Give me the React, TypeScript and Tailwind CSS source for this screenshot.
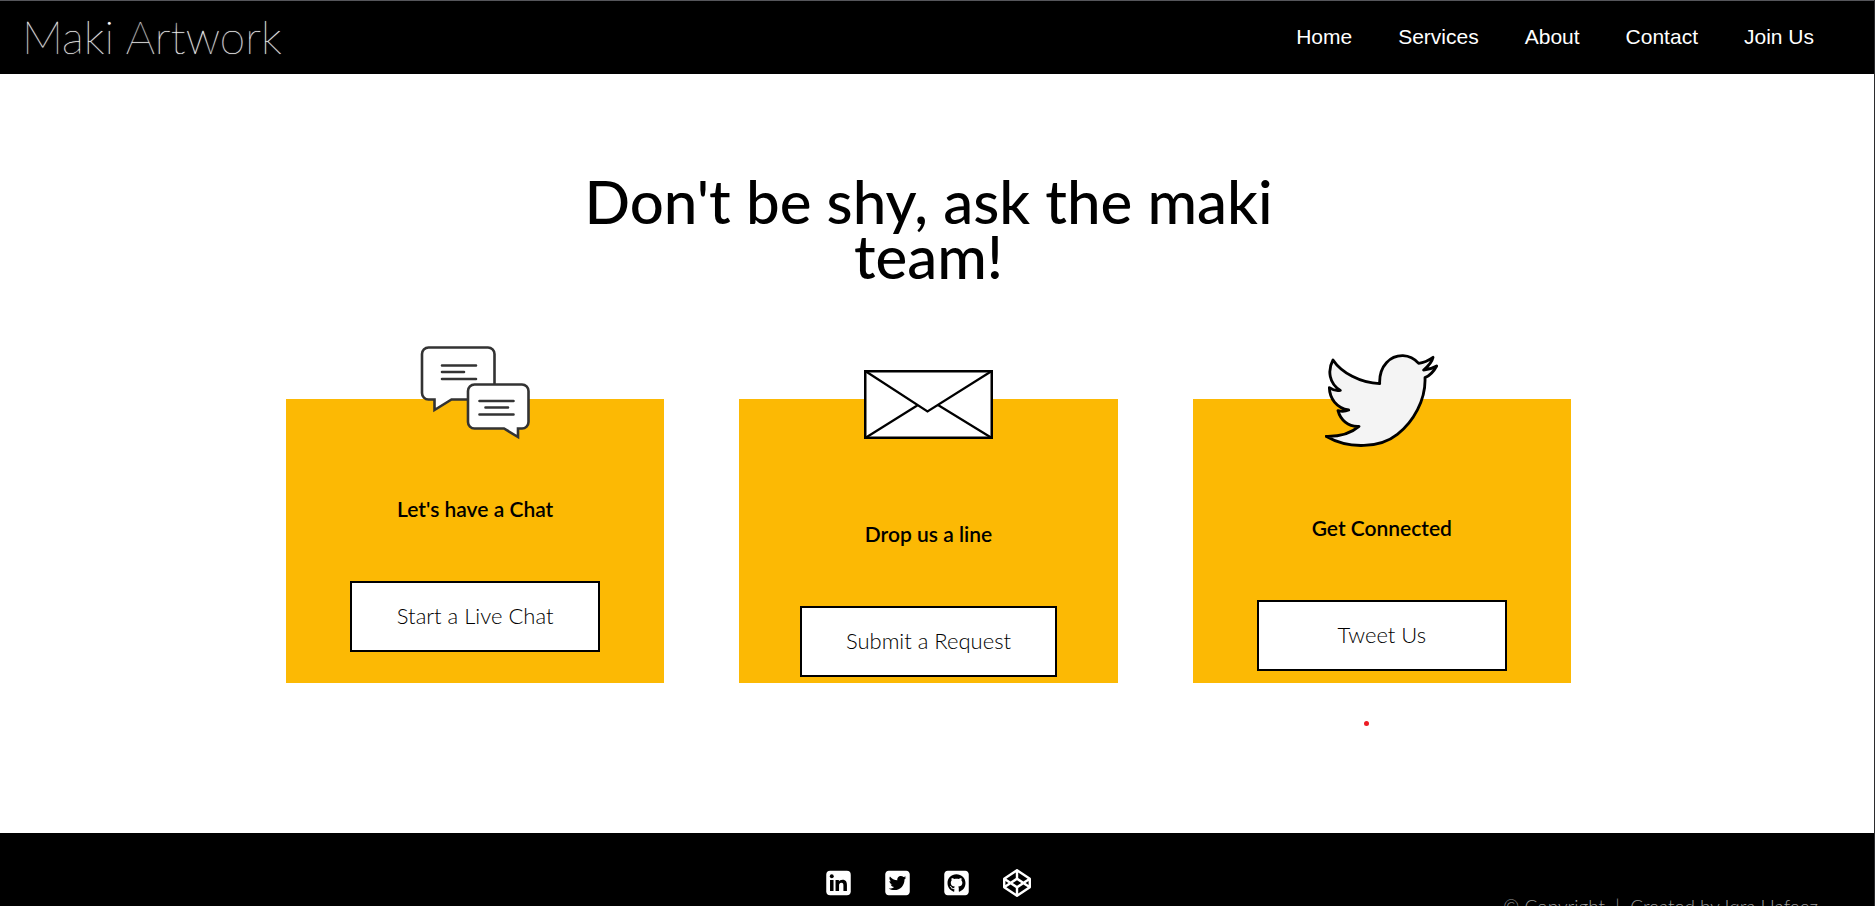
import { FaCodepen, FaSquareGithub, FaSquareTwitter } from "react-icons/fa6";
import type { ReactNode } from "react";

const navItems = ["Home", "Services", "About", "Contact", "Join Us"];

function ChatIcon() {
  return (
    <svg width="110" height="95" viewBox="0 0 110 95" fill="#fff" stroke="#333" strokeWidth="2.6" strokeLinecap="round" aria-hidden="true">
      <path d="M8.500 2.500H68a6.500 6.500 0 0 1 6.500 6.500V48a6.500 6.500 0 0 1-6.500 6.500H31.500L14.500 65V54.500H8.500A6.500 6.500 0 0 1 2 48V9A6.500 6.500 0 0 1 8.500 2.500Z" />
      <path d="M22 20.500H56M22 27H44M22 34H56" />
      <path d="M54.500 39.500H102a6.500 6.500 0 0 1 6.500 6.500V77a6.500 6.500 0 0 1-6.500 6.500H98V92L84 83.500H54.500A6.500 6.500 0 0 1 48 77V46A6.500 6.500 0 0 1 54.500 39.500Z" />
      <path d="M59.500 56H93.500M65.500 62.500H88M59.500 69.500H93.500" />
    </svg>
  );
}

function EnvelopeIcon() {
  return (
    <svg width="129" height="69" viewBox="0 0 129 69" fill="none" stroke="#000" strokeWidth="2.200" aria-hidden="true">
      <rect x="1.200" y="1.200" width="126.600" height="66.600" fill="#fff" strokeWidth="2.600" />
      <path d="M2 1.500L63.500 41.500L127 1.500M2 67.500L54 35M127 67.500L74 35" />
    </svg>
  );
}

function BirdIcon() {
  return (
    <svg width="113" height="94" viewBox="75 43 339 282" fill="#f4f4f4" stroke="#000" strokeWidth="8.500" strokeLinejoin="round" aria-hidden="true">
      <path d="M99 61C124 99 181 130 239 132C237 77 272 47 309 48C329 49 346 60 356 71C372 69 386 62 399 53C396 67 385 79 371 91C385 90 398 86 410 79C402 94 389 108 375 114C378 180 340 247 292 284C241 325 147 330 78 290C119 291 154 280 177 260C144 262 121 240 114 213C126 216 137 215 146 211C109 205 89 176 88 144C98 151 110 154 121 152C87 131 82 92 99 61Z" />
    </svg>
  );
}

function LinkedInIcon() {
  return (
    <svg width="25" height="28" viewBox="0 0 448 512" aria-hidden="true">
      <rect y="32" width="448" height="448" rx="72" fill="#fff" />
      <circle cx="101" cy="132" r="36" />
      <path d="M69 200H133V404H69ZM170 200H231V228C241 210 264 195 297 195C363 195 378 239 378 294V404H314V306C314 279 313 253 277 253C242 253 234 280 234 305V404H170Z" />
    </svg>
  );
}

type ContactCardProps = { icon: ReactNode; title: string; action: string; iconSpace: string; wide?: boolean };

function ContactCard({ icon, title, action, iconSpace, wide }: ContactCardProps) {
  return (
    <article className="flex h-[284px] flex-1 flex-col items-center bg-[#fcb904]">
      <div className={iconSpace}>{icon}</div>
      <h2 className="text-[21px] leading-7 font-semibold">{title}</h2>
      <button
        type="button"
        className={`mt-[58px] h-[71px] shrink-0 border-2 border-black bg-white pb-[2px] text-[22px] font-light ${wide ? "w-[257px]" : "w-[250px]"}`}
      >
        {action}
      </button>
    </article>
  );
}

export default function App() {
  return (
    <div className="flex h-screen flex-col overflow-hidden border-r border-[#2b2b2d] bg-white font-['Lato',sans-serif] text-black">
      <header className="flex h-[74px] shrink-0 items-center justify-between border-t border-[#55565b] bg-black pr-[60px] pb-[2px] pl-[22px] text-white">
        <a href="#home" className="text-[46px] leading-none font-thin [text-shadow:0_0_1px_#fff]">Maki Artwork</a>
        <nav className="flex gap-[46px] font-['Liberation_Sans',sans-serif] text-[21px]">
          {navItems.map((item) => (
            <a key={item} href={`#${item.toLowerCase().replace(" ", "-")}`}>{item}</a>
          ))}
        </nav>
      </header>

      <main className="h-[759px] shrink-0 pt-[100px] pr-[17px]">
        <h1 className="mx-auto max-w-[743px] text-center text-[60px] leading-[55px] font-medium">Don't be shy, ask the maki team!</h1>
        <section className="mx-auto mt-[115px] flex w-full max-w-[1285px] gap-[75px]">
          <ContactCard icon={<ChatIcon />} title="Let's have a Chat" action="Start a Live Chat" iconSpace="-mt-[54px] h-[150px]" />
          <ContactCard icon={<EnvelopeIcon />} title="Drop us a line" action="Submit a Request" iconSpace="-mt-[29px] h-[150px]" wide />
          <ContactCard icon={<BirdIcon />} title="Get Connected" action="Tweet Us" iconSpace="-mt-[45px] h-[160px]" />
        </section>
        <div className="mx-auto flex w-full max-w-[1285px] justify-end pt-[38px] pr-[202px]">
          <span className="size-[5px] rounded-full bg-[#ed1c24]" />
        </div>
      </main>

      <footer className="h-32 shrink-0 bg-black pt-[36px] text-white">
        <div className="flex items-center justify-center gap-[34px] pr-[17px] text-[28px]">
          <a href="#linkedin" aria-label="LinkedIn"><LinkedInIcon /></a>
          <a href="#twitter" aria-label="Twitter"><FaSquareTwitter className="w-[25px]" /></a>
          <a href="#github" aria-label="GitHub"><FaSquareGithub className="w-[25px]" /></a>
          <a href="#codepen" aria-label="CodePen"><FaCodepen /></a>
        </div>
        <p className="pr-14 text-right text-[19px] leading-5 font-light text-[#999]">© Copyright &nbsp;|&nbsp; Created by Iqra Hafeez</p>
      </footer>
    </div>
  );
}
